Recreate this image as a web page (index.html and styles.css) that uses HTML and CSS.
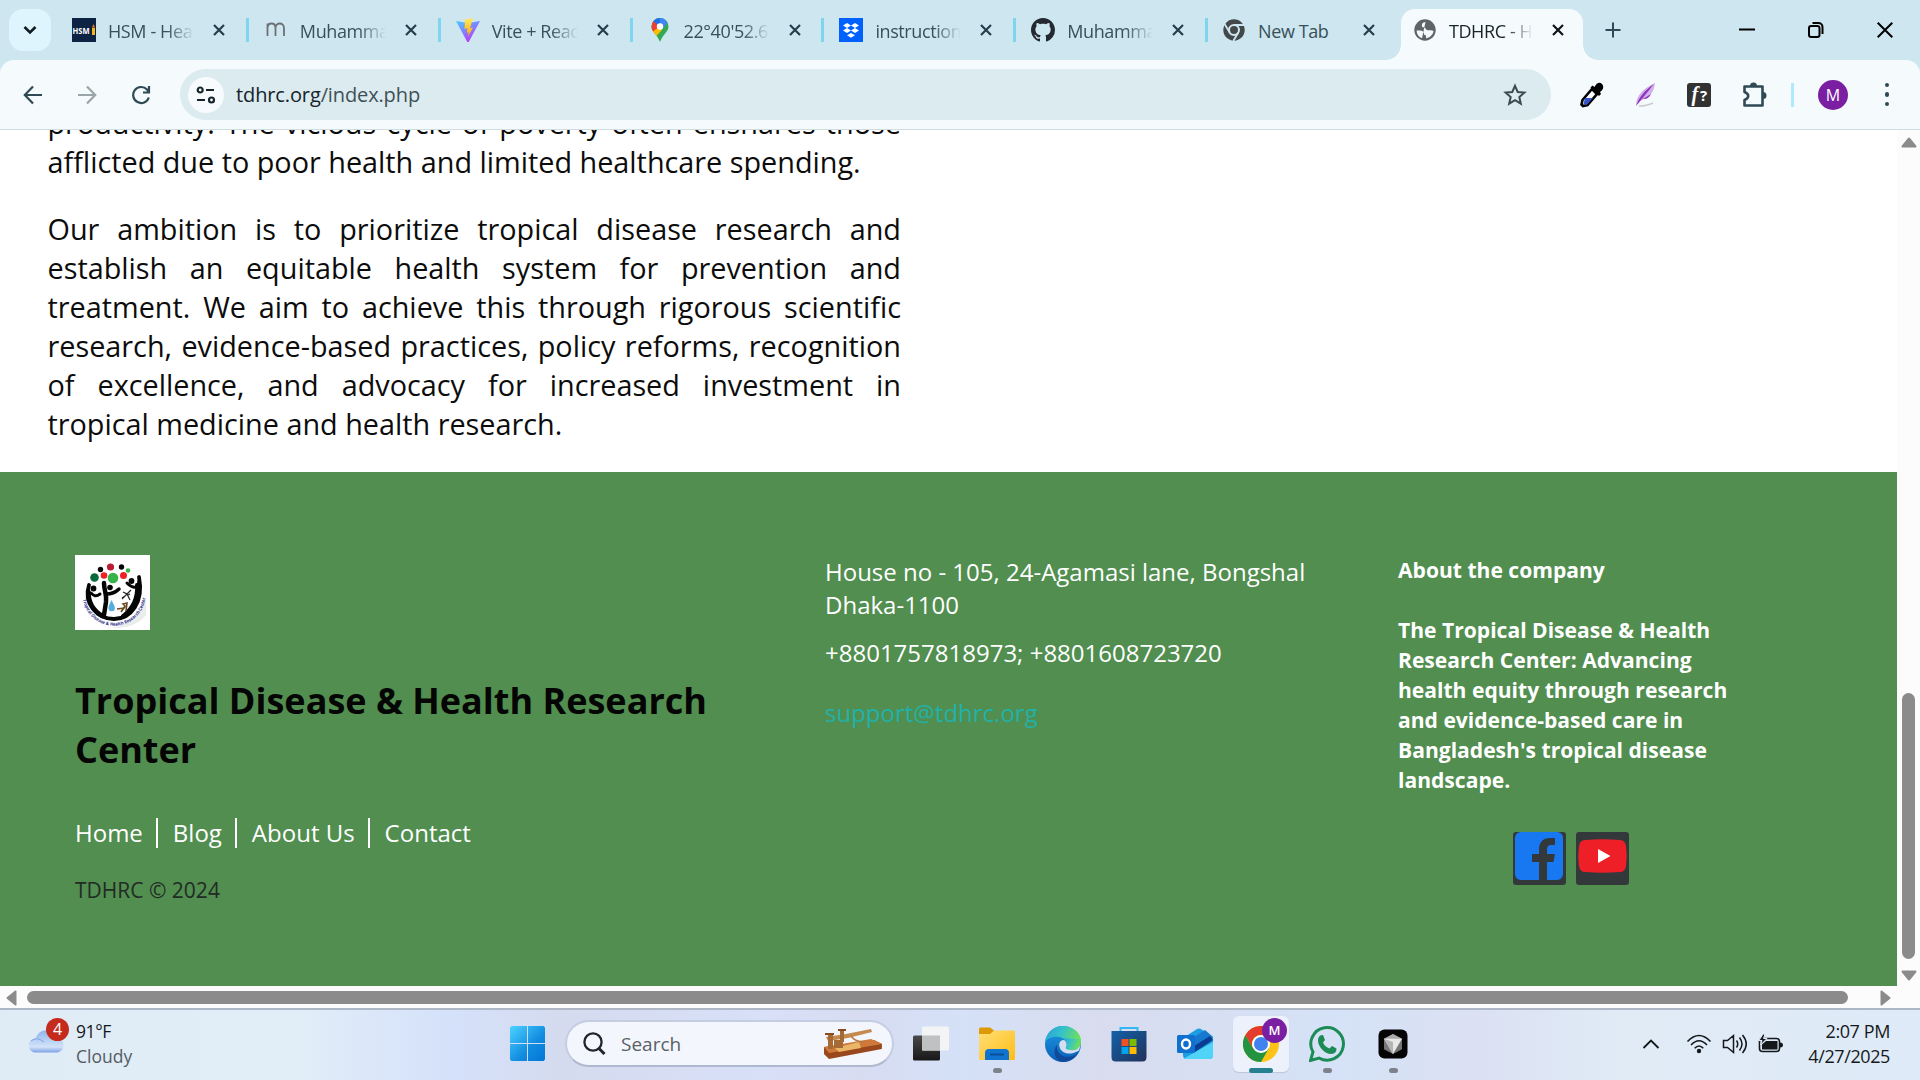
FILE: index.html
```html
<!DOCTYPE html>
<html lang="en">
<head>
<meta charset="utf-8">
<title>TDHRC - Home</title>
<link rel="stylesheet" href="styles.css">
</head>
<body>
<div class="screen">
  <header class="tabstrip">
    <button class="tab-search"><svg width="14" height="10" viewBox="0 0 14 10"><path d="M1.5 2l5.500 5.500L12.500 2" fill="none" stroke="#111c20" stroke-width="2.600"/></svg></button>
    <div class="tab">
      <svg class="fav" viewBox="0 0 24 24"><rect width="24" height="24" fill="#0c2344"/><text x="0.500" y="16" font-size="8.500" font-weight="700" fill="#fff" font-family="Open Sans" textLength="17" lengthAdjust="spacingAndGlyphs">HSM</text><path d="M20 10h3v7h-3z" fill="#f3b51b"/><path d="M21.500 6l1.500 3.500h-3z" fill="#ef7d1a"/></svg>
      <span class="title">HSM - Health</span><svg class="x" viewBox="0 0 12 12"><path d="M1 1l10 10M11 1L1 11"/></svg>
    </div>
    <div class="tab">
      <svg class="fav" viewBox="0 0 24 24"><path d="M3.500 18V5.500M3.500 10c0-6 8-6 8 0v8M11.500 10c0-6 8.500-6 8.500 0v8" fill="none" stroke="#6b7173" stroke-width="1.800"/></svg>
      <span class="title">Muhammad</span><svg class="x" viewBox="0 0 12 12"><path d="M1 1l10 10M11 1L1 11"/></svg>
    </div>
    <div class="tab">
      <svg class="fav" viewBox="0 0 24 24"><defs><linearGradient id="va" x1="0" y1="0" x2=".6" y2="1"><stop offset="0" stop-color="#41d1ff"/><stop offset="1" stop-color="#bd34fe"/></linearGradient><linearGradient id="vb" x1="0" y1="0" x2="0" y2="1"><stop offset="0" stop-color="#ffea5f"/><stop offset="1" stop-color="#ffa800"/></linearGradient></defs><path d="M0 3l12 2 12-2-11.300 21q-.7.700-1.400 0z" fill="url(#va)"/><path d="M17 0L9 1.600 8.500 11l3-.7-.8 4.500 2-.6-1 5 5.300-9.600-3 .6z" fill="url(#vb)"/></svg>
      <span class="title">Vite + React</span><svg class="x" viewBox="0 0 12 12"><path d="M1 1l10 10M11 1L1 11"/></svg>
    </div>
    <div class="tab">
      <svg class="fav" viewBox="0 0 24 24"><defs><clipPath id="pin"><path d="M12 0a8.500 8.500 0 0 0-8.500 8.500c0 5.500 6 8 8.500 15.500 2.500-7.500 8.500-10 8.500-15.500A8.500 8.500 0 0 0 12 0z"/></clipPath></defs><g clip-path="url(#pin)"><path d="M0 0h24v24H0z" fill="#34a853"/><path d="M2 15L18-1 12 8.500 6 18z" fill="#fbbc04"/><path d="M0 0h8l4 8.500L5 15 0 11z" fill="#ea4335"/><path d="M5 3L9-1h4l-1 9.500z" fill="#1a73e8"/><path d="M12 0h9v3l-9 11z" fill="#4285f4"/><path d="M4 14l8-5.500 2 3.500-7.500 8z" fill="#fbbc04"/></g><circle cx="12" cy="8.500" r="3.200" fill="#fff"/></svg>
      <span class="title">22°40'52.6"N</span><svg class="x" viewBox="0 0 12 12"><path d="M1 1l10 10M11 1L1 11"/></svg>
    </div>
    <div class="tab">
      <svg class="fav" viewBox="0 0 24 24"><path d="M0 0h24v24H0z" fill="#0061ff"/><path d="M8 5l4 2.500L8 10 4 7.500zM16 5l4 2.500-4 2.500-4-2.500zM8 10l4 2.500L8 15l-4-2.500zM16 10l4 2.500-4 2.500-4-2.500zM12 15l4 2.300-4 2.500-4-2.500z" fill="#fff"/></svg>
      <span class="title">instructions</span><svg class="x" viewBox="0 0 12 12"><path d="M1 1l10 10M11 1L1 11"/></svg>
    </div>
    <div class="tab">
      <svg class="fav" viewBox="0 0 16 16"><path fill="#24292f" d="M8 0C3.580 0 0 3.580 0 8c0 3.540 2.290 6.530 5.470 7.590.4.070.55-.17.55-.38 0-.19-.01-.82-.01-1.490-2.010.37-2.530-.49-2.690-.94-.09-.23-.48-.94-.82-1.130-.28-.15-.68-.52-.01-.53.63-.01 1.080.58 1.230.82.72 1.210 1.870.87 2.330.66.070-.52.280-.87.510-1.070-1.780-.2-3.640-.89-3.640-3.950 0-.87.310-1.590.82-2.150-.08-.2-.36-1.020.08-2.120 0 0 .67-.21 2.200.82.640-.18 1.320-.27 2-.27s1.360.09 2 .27c1.530-1.040 2.200-.82 2.200-.82.440 1.100.16 1.920.08 2.120.51.560.82 1.270.82 2.150 0 3.070-1.870 3.750-3.650 3.950.29.250.54.730.54 1.480 0 1.070-.01 1.930-.01 2.200 0 .21.150.46.550.38A8.010 8.010 0 0 0 16 8c0-4.420-3.580-8-8-8z"/></svg>
      <span class="title">Muhammad</span><svg class="x" viewBox="0 0 12 12"><path d="M1 1l10 10M11 1L1 11"/></svg>
    </div>
    <div class="tab last">
      <svg class="fav" viewBox="0 0 24 24"><circle cx="12" cy="12" r="10.700" fill="#43484b"/><circle cx="12" cy="12" r="5" fill="#43484b" stroke="#cee6ef" stroke-width="2"/><path d="M12 7h10M7.700 14.500L2.600 6M16.300 14.500l-5 8.500" stroke="#cee6ef" stroke-width="1.800"/></svg>
      <span class="title">New Tab</span><svg class="x" viewBox="0 0 12 12"><path d="M1 1l10 10M11 1L1 11"/></svg>
    </div>
    <div class="tab active">
      <svg class="fav" viewBox="0 0 24 24"><circle cx="12" cy="12" r="10.700" fill="#5f6468"/><path d="M12.500 4c-3 .2-4.500 2-4 4 .5 2.200 4 1 4.500 3 .4 1.500 2 1.300 3.500 1.300 1.600 0 4 .2 4 1.200-.8 3.500-4 6.500-7.500 6.800.6-3-.6-3.300-2-3.800 0-3-1.500-4-4-4H3.600c0 3.500 2 6.500 5.400 7.800" fill="#f5fafd"/><path d="M5 8.500c1-2.500 3-4.300 5.500-4.800-1.500 1.500-2 3-1.500 5 .3 1.300-2 2.300-4 2.300z" fill="#5f6468"/></svg>
      <span class="title">TDHRC - Home</span><svg class="x" viewBox="0 0 12 12"><path d="M1 1l10 10M11 1L1 11"/></svg>
    </div>
    <svg class="plus" width="16" height="16" viewBox="0 0 16 16"><path d="M8 .5v15M.5 8h15" stroke="#2e4a54" stroke-width="2"/></svg>
    <div class="winctl">
      <svg width="16" height="16" viewBox="0 0 16 16"><path d="M0 7.500h16"/></svg>
      <svg width="16" height="16" viewBox="0 0 16 16"><rect x="1" y="4" width="10.500" height="11" rx="2.200"/><path d="M4.500 1h6a4 4 0 0 1 4 4v7"/></svg>
      <svg width="16" height="16" viewBox="0 0 16 16"><path d="M.7.700l14.600 14.600M15.300.7L.7 15.300"/></svg>
    </div>
  </header>

  <div class="toolbar">
    <nav class="nav">
      <svg width="20" height="20" viewBox="0 0 20 20"><path d="M19 10H2M10 1.500L1.800 10l8.200 8.500"/></svg>
      <svg class="off" width="20" height="20" viewBox="0 0 20 20"><path d="M1 10h17M10 1.500l8.200 8.500-8.200 8.500"/></svg>
      <svg width="20" height="20" viewBox="0 0 20 20"><path d="M17.800 12.500A8 8 0 1 1 16 4.500l2 2.500M18 1v6.500h-6"/></svg>
    </nav>
    <div class="omnibox">
      <div class="chip"><svg width="20" height="18" viewBox="0 0 20 18"><g fill="none" stroke="#15242a" stroke-width="2.200"><circle cx="4.200" cy="4" r="2.500"/><path d="M10 4h8M1 14h8"/><circle cx="15.500" cy="14" r="2.500"/></g></svg></div>
      <span class="url"><b>tdhrc.org</b>/index.php</span>
      <svg class="star" width="24" height="24" viewBox="0 0 24 24"><path d="M12 2.800l2.700 6.200 6.700.6-5.100 4.400 1.500 6.600L12 17.100l-5.800 3.500L7.700 14 2.600 9.600l6.700-.6z" fill="none" stroke="#3b4a50" stroke-width="2"/></svg>
    </div>
    <div class="ext">
      <svg width="24" height="26" viewBox="0 0 24 26"><path d="M12 7l5 5L7.500 23 3 24l-1.500-1.500L2.500 18z" fill="#fff" stroke="#000" stroke-width="2.600"/><path d="M5 16h8L6.500 23 3.500 22z" fill="#3553c8"/><path d="M10.500 5.500l2-2 2 1.500c2-4 5-5.500 7.500-3s1 6-2 8l1 2-2 2z"/></svg>
      <svg width="22" height="26" viewBox="0 0 22 26"><path d="M1 24C1 13 9 6 20 1c-1 7-3 11-7 14s-8 3-10 5z" fill="#d3b0ea"/><path d="M1 24C4 15 10 8 19 2 13 9 9 15 1 24zM8 17c4 0 6-1 8-5" fill="#8e35bf"/><path d="M4 24c6 0 10-1 14-3" fill="none" stroke="#ccc" stroke-width="1.500"/></svg>
      <svg width="24" height="24" viewBox="0 0 24 24"><rect width="24" height="24" rx="3" fill="#323232"/><text x="4.500" y="18" font-size="20" font-style="italic" font-weight="700" fill="#fff" font-family="Liberation Serif">f</text><text x="13" y="17.500" font-size="15" font-weight="700" fill="#fff" font-family="Open Sans">?</text></svg>
      <svg width="26" height="26" viewBox="0 0 26 26"><path d="M2.500 4.500h18v19h-18v-5.500c5-2 5-6 0-8z" fill="none" stroke="#2e4a54" stroke-width="2.600" stroke-linejoin="round"/><path d="M8 4a3.500 3.500 0 0 1 7 0zM21 10a3.500 3.500 0 0 1 0 7z" fill="#2e4a54"/></svg>
    </div>
    <span class="tsep"></span>
    <span class="avatar">M</span>
    <span class="dots"><i></i><i></i><i></i></span>
  </div>

  <div class="viewport">
    <div class="page">
      <section class="about">
        <p><span class="full">productivity. The vicious cycle of poverty often ensnares those</span> afflicted due to poor health and limited healthcare spending.</p>
        <p>Our ambition is to prioritize tropical disease research and establish an equitable health system for prevention and treatment. We aim to achieve this through rigorous scientific research, evidence-based practices, policy reforms, recognition of excellence, and advocacy for increased investment in tropical medicine and health research.</p>
      </section>
      <footer class="footer">
        <div class="brand">
          <svg class="logo" viewBox="0 0 75 75"><defs><path id="arc" d="M8 44.500A31.500 31.500 0 0 0 70.500 41.500"/></defs><path d="M0 0h75v75H0z" fill="#fff"/><path d="M16 66q24 14 45-4l10-18v16Q62 72 42 73q-16 0-26-7z" fill="#ececec"/><circle cx="39" cy="38" r="26" fill="#fff"/>
            <g fill="none" stroke="#050505" stroke-linecap="round"><path d="M14 30C8 48 22 64 39 64s30-17 25-42" stroke-width="3.800"/><path d="M13.500 37q0 16 14 24" stroke-width="4.500"/><path d="M16 38c3 3 5 4 9 1" stroke-width="3"/><path d="M64 26c-1 10-8 6-12 2" stroke-width="3"/><path d="M62 30c1 14-5 24-14 31" stroke-width="4"/><path d="M29 28c0 8 3 11 2 19l-2 13" stroke-width="4.500"/><path d="M31 39q8 0 13-5" stroke-width="3.500"/></g>
            <g fill="#050505"><circle cx="18.500" cy="33.500" r="2.900"/><circle cx="35" cy="32.500" r="2.800"/><circle cx="56.500" cy="26" r="2.900"/><circle cx="25.500" cy="14.500" r="2.700"/><circle cx="46.500" cy="12" r="2.700"/></g>
            <circle cx="35.500" cy="12" r="3.600" fill="#b91d35"/><circle cx="29" cy="20.500" r="3.300" fill="#ee2028"/><circle cx="48.500" cy="20.500" r="3.500" fill="#ee2028"/><circle cx="19.500" cy="22.500" r="4.300" fill="#0b6a3b"/><circle cx="38" cy="23" r="5.300" fill="#37b34a"/><circle cx="53" cy="15.500" r="2.300" fill="#37b34a"/>
            <path d="M36.500 45c-1 3-3 5-3 8a3.200 3.200 0 0 0 6.400 0c0-3-2.400-5-3.400-8z" fill="#56ade0"/><path d="M42 54l7-1-3 4 4-6-2-2 4-1-1 8" fill="none" stroke="#6b4a22" stroke-width="1.600"/><path d="M47 44l5-5-4-2M52 39l3 6M52 39l4-4M50 41l-3 2M53 40l2-1" fill="none" stroke="#222" stroke-width="1.200"/>
            <text font-size="4.600" font-weight="700" fill="#2a2d86" font-family="Open Sans" textLength="90" lengthAdjust="spacingAndGlyphs"><textPath href="#arc" textLength="90" lengthAdjust="spacingAndGlyphs">Tropical Disease &amp; Health Research Center</textPath></text></svg>
          <h2>Tropical Disease &amp; Health Research Center</h2>
          <div class="links"><a>Home</a><a>Blog</a><a>About Us</a><a>Contact</a></div>
          <p class="copy">TDHRC © 2024</p>
        </div>
        <div class="contact">
          <p>House no - 105, 24-Agamasi lane, Bongshal<br>Dhaka-1100</p>
          <p class="phone">+8801757818973; +8801608723720</p>
          <p class="mail">support@tdhrc.org</p>
        </div>
        <div class="company">
          <p>About the company</p>
          <p class="desc">The Tropical Disease &amp; Health Research Center: Advancing health equity through research and evidence-based care in Bangladesh's tropical disease landscape.</p>
          <div class="social">
            <svg viewBox="0 0 53 53"><rect width="53" height="53" rx="3" fill="#33383b"/><rect x="2" width="48" height="48" rx="6" fill="#1778f2"/><path d="M26 48V30h-7v-8h7v-4c0-8 4-12 11-12h5v7h-4c-3 0-4 2-4 5v4h8l-1.500 8H34v18z" fill="#33383b"/></svg>
            <svg viewBox="0 0 53 53"><rect width="53" height="53" rx="3" fill="#33383b"/><path d="M9 8q17.500-1.500 35 0 5 0 6 6 1.500 10 0 20-1 6-6 6-17.500 1.500-35 0-5 0-6-6-1.500-10 0-20 1-6 6-6z" fill="#ee1f26"/><path d="M22 17l12.500 7L22 31z" fill="#fff"/></svg>
          </div>
        </div>
      </footer>
    </div>
    <div class="vbar">
      <svg width="16" height="11" viewBox="0 0 16 11"><path d="M8 1.500L14.500 9.500H1.500z"/></svg>
      <span class="vthumb"></span>
      <svg width="16" height="11" viewBox="0 0 16 11"><path d="M8 9.500L14.500 1.500H1.500z"/></svg>
    </div>
  </div>
  <div class="hbar">
    <svg width="11" height="16" viewBox="0 0 11 16"><path d="M1.500 8L9.500 1.500v13z"/></svg>
    <span class="hthumb"></span>
    <svg width="11" height="16" viewBox="0 0 11 16"><path d="M9.500 8L1.500 1.500v13z"/></svg>
  </div>

  <div class="taskbar">
    <div class="weather">
      <div class="wicon"><svg width="36" height="26" viewBox="0 0 36 26"><defs><linearGradient id="cl" x1="0" y1="0" x2="0" y2="1"><stop offset="0" stop-color="#8fb4ec"/><stop offset=".75" stop-color="#d3e3f9"/><stop offset="1" stop-color="#7ba1e6"/></linearGradient></defs><path d="M7 25.500a7 7 0 0 1-.5-14 11 11 0 0 1 21-1 7.600 7.600 0 0 1 1 15z" fill="url(#cl)"/><path d="M2 14q6-5 13 1" fill="none" stroke="#7fa5e8"/></svg><b>4</b></div>
      <div><div class="l1">91°F</div><div class="l2">Cloudy</div></div>
    </div>
    <div class="apps">
      <svg class="start" width="35" height="35" viewBox="0 0 35 35"><defs><linearGradient id="w" x1="0" y1="0" x2="1" y2="1"><stop offset="0" stop-color="#4cd3ff"/><stop offset=".6" stop-color="#118be0"/><stop offset="1" stop-color="#0276d4"/></linearGradient></defs><path d="M1.500 0H17v17H0V1.500zM18 0h15.500L35 1.500V17H18zM0 18h17v17H1.500L0 33.500zM18 18h17v15.500L33.500 35H18z" fill="url(#w)"/></svg>
      <div class="search">
        <svg width="23" height="23" viewBox="0 0 23 23"><circle cx="10" cy="10" r="8.600" fill="none" stroke="#222629" stroke-width="2.300"/><path d="M16 16.500l5.500 5.500" stroke="#222629" stroke-width="3"/></svg>
        <span>Search</span>
        <svg width="60" height="32" viewBox="0 0 60 32"><path d="M1 19L51 12l8 4-.2 5L6 31l-5-5z" fill="#99471d"/><path d="M1 19l47-8 11 5-53 9z" fill="#cf7a3b"/><path d="M12 20l24-6 2 6-22 4z" fill="#e9b567"/><path d="M3 9l20-3 25-5 1 3-24 6-20 3z" fill="#c58a4e"/><path d="M5 5h5v16H5zM17 2h4v12h-4zM11 12h9v8h-9z" fill="#a66a35"/><path d="M2 5h9v2H2zM15 1h8v2h-8z" fill="#8a4d20"/><path d="M28 8q4 6 13 6" fill="none" stroke="#b87b42" stroke-width="1.500"/></svg>
      </div>
      <div class="app"><svg viewBox="0 0 36 36"><defs><linearGradient id="tv" x2="0" y2="1"><stop offset="0" stop-color="#4a4a4a"/><stop offset="1" stop-color="#171717"/></linearGradient></defs><rect y="9.500" width="27" height="25" rx="1.500" fill="url(#tv)"/><rect x="9" y=".5" width="27" height="24" rx="1.500" fill="#f3f4f6"/><path d="M9 9.500h18v15H9z" fill="#c0c1c3"/></svg></div>
      <div class="app"><svg viewBox="0 0 36 36"><defs><linearGradient id="fo" x2="1" y2="1"><stop offset="0" stop-color="#ffdf79"/><stop offset="1" stop-color="#ffbd14"/></linearGradient></defs><path d="M0 3q0-1.500 1.500-1.500h9.500l4 3v4H0z" fill="#dd9a04"/><path d="M0 8h11l4-3.500h20q1 0 1 1v27q0 1.500-1.500 1.500h-33Q0 34 0 32.500z" fill="url(#fo)"/><path d="M6 34v-7q0-4 4-4h16q4 0 4 4v7z" fill="#0f74cf"/><path d="M11 28.500h14" stroke="#084f98" stroke-width="2"/></svg><i></i></div>
      <div class="app"><svg viewBox="0 0 36 36"><defs><linearGradient id="e1" x2="1" y2=".3"><stop offset="0" stop-color="#2b9fdd"/><stop offset=".5" stop-color="#35c1c9"/><stop offset="1" stop-color="#6ee05a"/></linearGradient><linearGradient id="e2" x2="0" y2="1"><stop offset="0" stop-color="#1b9de2"/><stop offset="1" stop-color="#0a5fb8"/></linearGradient></defs><circle cx="18" cy="18" r="18" fill="url(#e2)"/><path d="M0 17C1 6 9 0 18 0c10 0 18 7 18 15 0 6-5 9-9 9-5 0-7-1-6-3 3-5-1-9-7-10C8 10 2 12 0 17z" fill="url(#e1)"/><path d="M12 19c-1 9 7 14 15 11q4-1 6-4-4 9-14 10C10 36 7 25 12 19z" fill="#10499a"/><path d="M19 14c-6 0-6 7-2 11 5 4 11 3 17-.5l2-6.500C34 22 30 25 26 24s-5-2-4.500-4C22 17 21 15 19 14z" fill="#d6ddf1"/><path d="M36 13c1 7-4 11-9 11-5 0-7-1-6-3 3-5-1-8-5-9z" fill="url(#e1)"/></svg></div>
      <div class="app"><svg viewBox="0 0 36 36"><defs><linearGradient id="st" x2="1" y2="1"><stop offset="0" stop-color="#1261a8"/><stop offset="1" stop-color="#22325b"/></linearGradient></defs><path d="M9.500 6V2h17v4" fill="none" stroke="#33b8f5" stroke-width="2"/><path d="M.5 5h35v26q0 4.500-4 4.500h-27q-4 0-4-4.500z" fill="url(#st)"/><path d="M10.500 13h7v7h-7z" fill="#f25022"/><path d="M18.500 13h7v7h-7z" fill="#7fba00"/><path d="M10.500 21h7v7h-7z" fill="#00a4ef"/><path d="M18.500 21h7v7h-7z" fill="#ffb900"/></svg></div>
      <div class="app"><svg viewBox="0 0 36 36"><path d="M6 12L20 3q2-1 4 0l12 8v18q0 4-4 4H10q-4 0-4-4z" fill="#1b9de2"/><path d="M8 17l20-13 8 7L14 27z" fill="#1679cf"/><path d="M14 22l19-12 3 4-18 12z" fill="#0a3d91"/><path d="M6 33l30-17v13q0 4-4 4H10z" fill="#4fd3f7"/><rect y="9" width="18" height="18" rx="1.500" fill="#1070cf"/><ellipse cx="9" cy="18" rx="4" ry="4.500" fill="none" stroke="#fff" stroke-width="2.400"/></svg></div>
      <div class="app current"><svg viewBox="0 0 36 36"><circle cx="18" cy="18" r="18" fill="#fdc316"/><path d="M2.400 9A18 18 0 0 0 18 36l7.800-13.500L10.200 22.500z" fill="#24933f"/><path d="M2.400 9A18 18 0 0 1 33.600 9H18a9 9 0 0 0-7.800 13.500z" fill="#e33b2e"/><circle cx="18" cy="18" r="9" fill="#fff"/><circle cx="18" cy="18" r="7" fill="#4082ee"/></svg><b>M</b><i></i></div>
      <div class="app"><svg viewBox="0 0 36 36"><path d="M1.500 34.500L4 26a16.300 16.300 0 1 1 6 6z" fill="none" stroke="#1c8b55" stroke-width="3"/><path d="M11 9.500l3-.5 2 5-2 2.500q2 4.500 6.500 6l2.500-2.500 4.500 2.500q0 5-5 5.500C15 28 9 20 9 14.500q0-3 2-5z" fill="#1c8b55"/></svg><i></i></div>
      <div class="app"><svg viewBox="0 0 36 36"><rect x="3.500" y="3.500" width="29" height="29" rx="6" fill="#050505"/><path d="M18 8l9 4.700v10.600L18 28l-9-4.700V12.700z" fill="#777"/><path d="M9 12.700L18 8l9 4.700-9 3.300z" fill="#ababab"/><path d="M9 12.700h18L18 28z" fill="#e8e8e8"/><path d="M9 12.700L18 16v12z" fill="#b5b5b5"/></svg><i></i></div>
    </div>
    <div class="tray">
      <svg width="18" height="12" viewBox="0 0 18 12"><path d="M1.500 10L9 2.500l7.500 7.500" fill="none" stroke="#15181b" stroke-width="1.800"/></svg>
      <svg class="wifi" width="26" height="20" viewBox="0 0 26 20"><g fill="none" stroke="#15181b" stroke-width="1.600"><path d="M1.500 7.500q11.500-12 23 0M5 11q8-8.500 16 0M8.700 14.300q4.300-4.600 8.600 0"/></g><circle cx="13" cy="17" r="2.200" fill="#15181b"/></svg>
      <svg width="26" height="22" viewBox="0 0 26 22"><g fill="none" stroke="#15181b" stroke-width="1.500"><path d="M1.500 7.500h4l6-5v17l-6-5h-4zM14.500 7.500q2.500 3.500 0 7M17.500 4.500q5 6.500 0 13M20.500 2q7.500 9 0 18"/></g></svg>
      <svg width="26" height="20" viewBox="0 0 26 20"><rect x="1.500" y="4.500" width="20" height="13" rx="3" fill="none" stroke="#15181b" stroke-width="1.600"/><path d="M4 15.500v-5L8 7h11.500v8.500z" fill="#15181b"/><path d="M22 8.500q3 0 3 2.500t-3 2.500z" fill="#15181b"/><path d="M5 0L1 6.500h3L2.500 11 9 4.500H5.500L7 0z" fill="#15181b" stroke="#dfecf7"/></svg>
      <div class="clock"><div>2:07 PM</div><div>4/27/2025</div></div>
    </div>
  </div>
</div>
</body>
</html>
```
FILE: styles.css
```css
* { box-sizing: border-box; }
body { margin: 0; font-family: "Open Sans", sans-serif; background: #fff; }
p, h2 { margin: 0; }
svg { display: block; flex: none; }
button { border: 0; padding: 0; }
.screen { width: 1920px; height: 1080px; overflow: hidden; display: flex; flex-direction: column; background: linear-gradient(#cee6ef 100px, #fff 100px); }

/* Tab strip */
.tabstrip { height: 60px; flex: none; background: #cee6ef; display: flex; align-items: center; padding-left: 9px; }
.tab-search { width: 42px; height: 42px; border-radius: 14px; background: #dff5fe; display: flex; align-items: center; justify-content: center; margin-right: 5px; }
.tab { width: 191.850px; height: 51px; margin-top: 9px; padding: 0 22px 9px 16px; display: flex; align-items: center; position: relative; color: #37505a; }
.tab::after { content: ""; position: absolute; right: -1px; top: 9px; width: 3px; height: 24px; background: #7fd4ef; }
.tab.last { padding-left: 15px; padding-right: 23px; }
.tab.last::after { display: none; }
.fav { width: 24px; height: 24px; }
.title { width: 86px; margin: 1px 19px 0 12px; overflow: hidden; white-space: nowrap; font-size: 18px; letter-spacing: -.4px; -webkit-mask-image: linear-gradient(90deg, #000 68%, transparent 100%); mask-image: linear-gradient(90deg, #000 68%, transparent 100%); }
.last .title { -webkit-mask-image: none; mask-image: none; }
.x { width: 12px; height: 12px; stroke: #243f49; stroke-width: 2.200; fill: none; }
.tab.active { width: 182px; margin-left: 2px; padding: 0 0 9px 12px; background: #f5fafd; border-radius: 14px 14px 0 0; color: #17242a; }
.tab.active .title { width: 84px; }
.tab.active::before, .tab.active::after { content: ""; position: absolute; top: auto; bottom: 0; width: 15px; height: 15px; display: block; }
.tab.active::before { left: -15px; background: radial-gradient(circle at 0 0, transparent 14.500px, #f5fafd 15px); }
.tab.active::after { right: -15px; background: radial-gradient(circle at 100% 0, transparent 14.500px, #f5fafd 15px); }
.active .x { stroke: #0d1518; }
.plus { margin-left: 22px; }
.winctl { margin-left: auto; padding-right: 27px; display: flex; gap: 53px; fill: none; stroke: #000; stroke-width: 2; }

/* Toolbar */
.toolbar { height: 70px; flex: none; background: #f5fafd; border-bottom: 1px solid #cfdde3; border-radius: 14px 14px 0 0; display: flex; align-items: center; padding-left: 23px; }
.nav { display: flex; gap: 34px; width: 157px; fill: none; stroke: #2e4a54; stroke-width: 2.200; }
.nav .off { stroke: #9aa5aa; }
.omnibox { width: 1371px; height: 51px; border-radius: 26px; background: #dcebef; display: flex; align-items: center; padding: 0 24px 0 8px; }
.chip { width: 36px; height: 36px; border-radius: 50%; background: #f7fbfd; display: flex; align-items: center; justify-content: center; }
.url { margin-left: 12px; font-size: 20px; letter-spacing: -.12px; color: #3e5057; flex: 1; }
.url b { font-weight: 400; color: #15242a; }
.ext { display: flex; align-items: center; margin-left: 29px; gap: 30.500px; }
.tsep { width: 3px; height: 24px; background: #b0e9fb; margin-left: 23px; }
.avatar { width: 30px; height: 30px; border-radius: 50%; background: #7b1fa2; color: #fff; font-size: 16px; display: flex; align-items: center; justify-content: center; margin-left: 24.500px; }
.dots { display: flex; flex-direction: column; gap: 5px; margin-left: 36.500px; }
.dots i { width: 4.500px; height: 4.500px; border-radius: 50%; background: #2e4a54; }

/* Web page */
.viewport { height: 856px; flex: none; display: flex; }
.page { width: 1897px; overflow: hidden; background: #fefffe; }
.about { height: 342px; width: 901px; padding-left: 47.500px; overflow: hidden; font-size: 28.800px; line-height: 39px; color: #0c0c0c; text-align: justify; }
.about p:first-child { margin-top: -27px; margin-bottom: 28px; }
.full { display: block; white-space: nowrap; text-align-last: justify; }
.footer { height: 514px; background: #518e4f; display: flex; padding: 83px 75px 0; color: #fff; font-size: 24px; line-height: 33px; }
.brand { width: 750px; }
.logo { width: 75px; height: 75px; }
.brand h2 { width: 660px; margin-top: 46px; font-size: 36px; line-height: 49px; color: #050505; }
.links { display: flex; margin-top: 44px; line-height: 30px; }
.links a { padding-right: 13.500px; margin-right: 14.500px; border-right: 2px solid #fff; }
.links a:last-child { border: 0; }
.copy { margin-top: 26px; font-size: 21px; color: #222b25; }
.contact { width: 573px; }
.phone { margin-top: 15px; }
.mail { margin-top: 27px; color: #20b2aa; }
.company { width: 347px; font-size: 21.080px; line-height: 30px; font-weight: 700; }
.desc { margin-top: 30px; }
.social { display: flex; gap: 10px; margin-top: 37px; padding-left: 115px; }
.social svg { width: 53px; height: 53px; }

/* Scrollbars */
.vbar { width: 23px; background: #fcfcfc; display: flex; flex-direction: column; align-items: center; padding: 7px 0 4px; }
.vbar path, .hbar path { fill: #8b8b8b; stroke: #8b8b8b; stroke-width: 2; stroke-linejoin: round; }
.vthumb { width: 13px; height: 266px; border-radius: 7px; background: #8b8b8b; margin: 545px 0 11px; }
.hbar { height: 22px; flex: none; background: #fcfcfc; display: flex; align-items: center; padding: 1px 0 0 6px; }
.hthumb { width: 1821px; height: 13px; border-radius: 7px; background: #8b8b8b; margin: 0 32px 0 10px; }

/* Taskbar */
.taskbar { flex: 1; border-top: 2px solid #adb7c5; display: flex; align-items: center; padding-bottom: 3px; background: linear-gradient(90deg, #dfebf5 0, #e1edf7 300px, #d5e1fa 450px, #d4dbef 560px, #d8e0f8 760px, #d7dcf1 860px, #d5e1f8 960px, #d8dcee 1100px, #d5e2f7 1340px, #dbe1f2 1480px, #e0ebf6 1620px, #deeaf7 1920px); }
.weather { width: 510px; display: flex; padding-left: 29px; gap: 11px; font-size: 17.500px; letter-spacing: 0; line-height: 24.500px; color: #16191c; }
.l1 { letter-spacing: -.4px; }
.l2 { color: #565c62; }
.wicon { position: relative; padding-top: 8px; }
.wicon b { position: absolute; left: 17px; top: -1px; width: 23px; height: 23px; border-radius: 50%; background: #c52b1d; color: #fff; font-size: 16px; line-height: 23px; text-align: center; font-weight: 400; }
.apps { display: flex; align-items: center; }
.search { width: 329px; height: 47px; margin: 0 9px 0 20px; border-radius: 24px; border: 2px solid #c5cde2; border-bottom-color: #aeb8cf; background: #f3f6fd; display: flex; align-items: center; padding: 0 9px 0 16px; }
.search span { flex: 1; margin-left: 15px; font-size: 19px; color: #5a5f65; }
.app { width: 56px; height: 56px; margin-right: 10px; border-radius: 6px; display: flex; align-items: center; justify-content: center; position: relative; }
.app svg { width: 36px; height: 36px; }
.app i { position: absolute; left: 24px; bottom: -1px; width: 9px; height: 5px; border-radius: 3px; background: #7d828c; }
.app.current { background: #edf1fb; box-shadow: 0 1px 1px #bcc5da; }
.app.current i { left: 16px; width: 24px; background: #26808f; }
.app.current b { position: absolute; left: 29px; top: 2px; width: 25px; height: 25px; border-radius: 50%; background: #7b1fa2; color: #fff; font-size: 13px; line-height: 25px; text-align: center; font-weight: 600; }
.tray { margin-left: auto; padding-right: 30px; display: flex; align-items: center; }
.wifi { margin-left: 26px; }
.tray svg + svg + svg { margin-left: 10px; }
.clock { width: 106px; text-align: right; font-size: 18px; line-height: 24.500px; letter-spacing: -.4px; color: #16191c; white-space: nowrap; }
```
